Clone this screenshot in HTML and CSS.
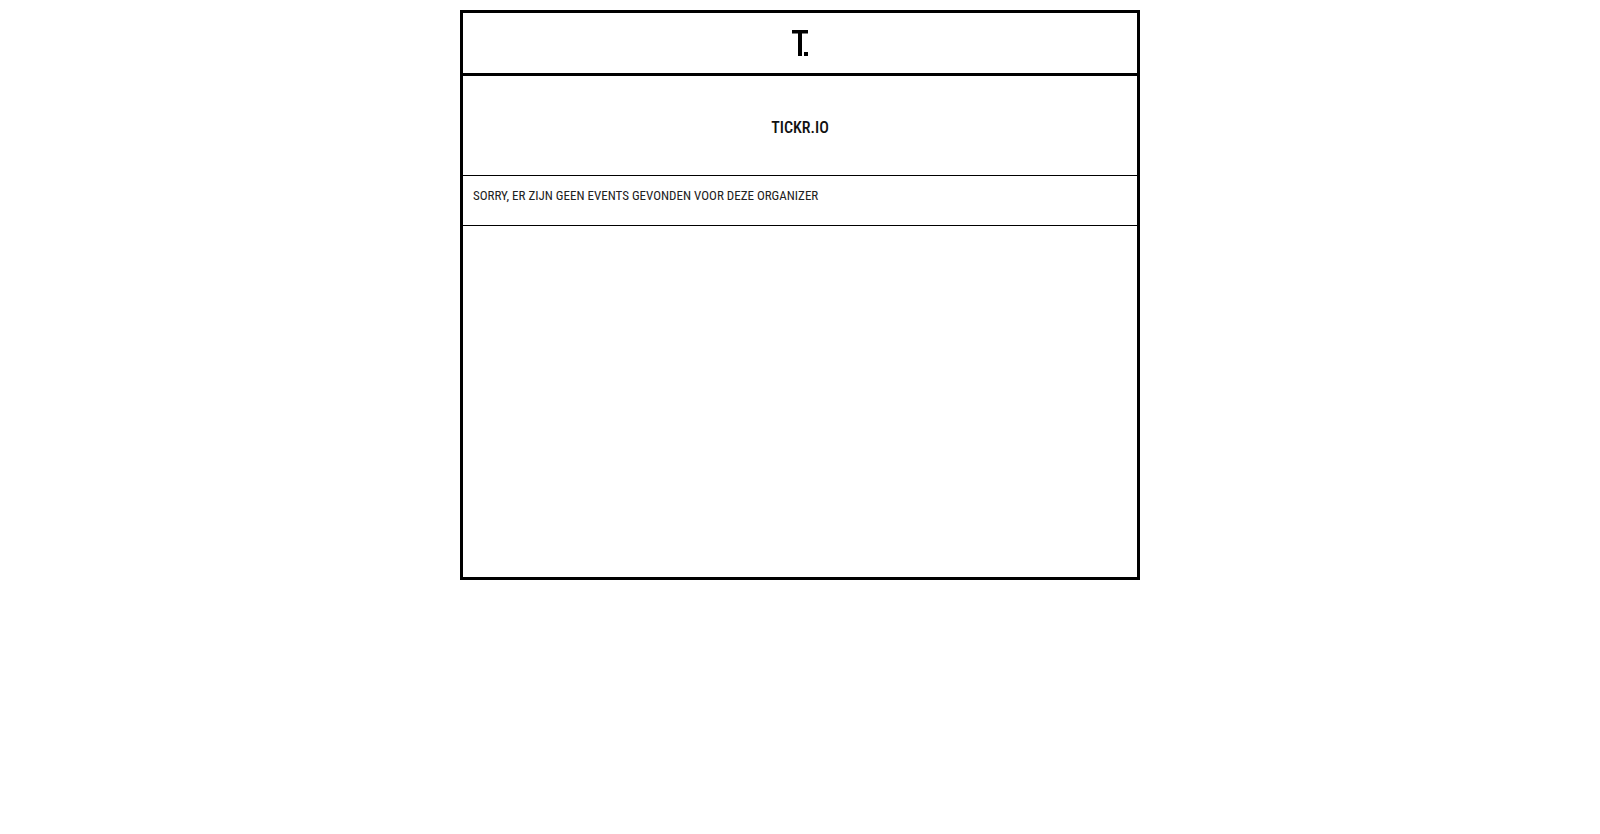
FILE: index.html
```html
<!DOCTYPE html>
<html lang="nl">
<head>
<meta charset="utf-8">
<meta name="viewport" content="width=device-width, initial-scale=1">
<title>TICKR.IO</title>
<link rel="stylesheet" href="styles.css">
</head>
<body>
<div class="shell">
  <header class="topbar">
    <svg class="logo" role="img" aria-label="Tickr" width="16" height="26" viewBox="0 0 16 26">
      <rect x="0" y="0" width="16" height="3.5"/>
      <rect x="6" y="0" width="4" height="26"/>
      <rect x="12" y="22" width="4" height="4"/>
    </svg>
  </header>
  <main>
    <section class="organizer"><h1 class="organizer-name">TICKR.IO</h1></section>
    <p class="notice">Sorry, er zijn geen events gevonden voor deze organizer</p>
  </main>
</div>
</body>
</html>
```
FILE: styles.css
```css
* {
  box-sizing: border-box;
}

body {
  margin: 0;
  padding: 10px;
  background: #fff;
  color: #212121;
  font-family: "Roboto Condensed", "Liberation Sans Narrow", Roboto, sans-serif;
  font-size: 13px;
  line-height: 20px;
}

.shell {
  max-width: 680px;
  min-height: 570px;
  margin: 0 auto;
  border: 3px solid #000;
}

.topbar {
  display: flex;
  justify-content: center;
  padding: 17px 10px;
  border-bottom: 3px solid #000;
}

.logo {
  display: block;
  fill: #000;
}

.organizer {
  padding: 42px 10px 37px;
  border-bottom: 1px solid #000;
  text-align: center;
}

.organizer-name {
  margin: 0;
  color: #111;
  font-size: 16px;
  font-weight: 500;
  line-height: 20px;
}

.notice {
  margin: 0;
  padding: 10px 10px 19px;
  border-bottom: 1px solid #000;
  text-transform: uppercase;
}
```
